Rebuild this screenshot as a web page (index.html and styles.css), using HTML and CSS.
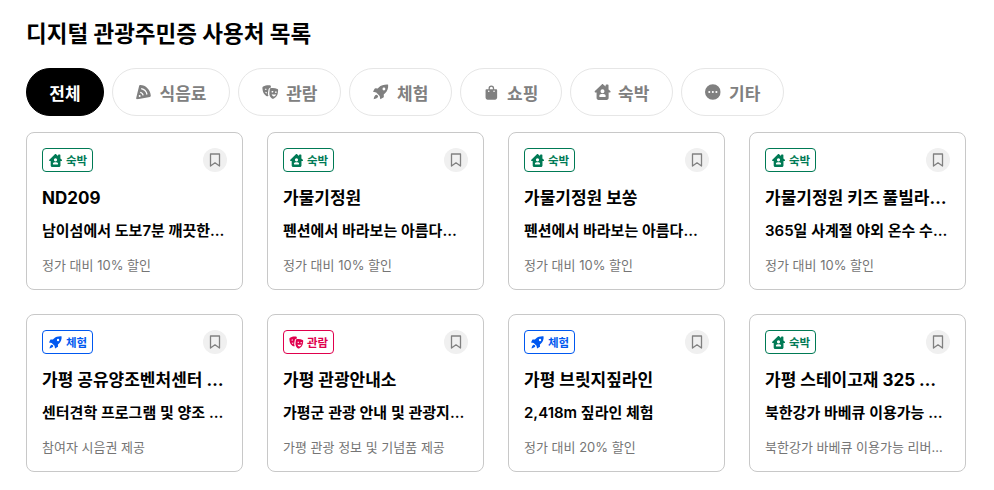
FILE: index.html
```html
<!DOCTYPE html>
<html lang="ko">
<head>
<meta charset="utf-8">
<title>디지털 관광주민증 사용처 목록</title>
<link rel="stylesheet" href="styles.css">
</head>
<body>
<svg class="defs" width="0" height="0" aria-hidden="true">
  <symbol id="i-food" viewBox="0 0 16 16"><path fill-rule="evenodd" d="M4.500 1C10 1 15 6 15.300 12c0 .6-.4 1.100-1 1.300L1.500 15.800c-.8.2-1.500-.5-1.300-1.300L3.200 2c.1-.6.7-1 1.300-1ZM5.500 4.200 5.200 5.500C8.200 6 10.200 8 10.700 11l1.300-.3C11.400 7.200 9 4.800 5.500 4.200ZM4.500 8 4.200 9.300C5.500 9.600 6.400 10.500 6.700 11.800L8 11.500C7.600 9.700 6.300 8.400 4.500 8ZM3.800 11.300a1 1 0 1 0 0 2 1 1 0 0 0 0-2Z"/></symbol>
  <symbol id="i-mask" viewBox="0 .5 18 15.500"><path d="M1.200 2.500C3.300 1.200 6 .8 8.300 1.100c.6.100 1 .5 1.100 1l.1 1.400c-1.500.3-2.500 1.200-2.700 2.600l-.5 3.100c-.2 1.200 0 2.400.6 3.400-.8.300-1.700.2-2.400-.2C2.500 11.300 1 9 .7 6.500L.4 3.900c0-.6.300-1.100.8-1.400ZM3 5.100c.5-.4 1.200-.5 1.800-.1l-.3 1.200c-.4-.3-.8-.3-1.200-.1L3 5.100Zm.2 3c.7.500 1.500.5 2.200.3-.1.800-.4 1.300-.9 1.500-.6-.3-1-1-1.300-1.800Z" fill-rule="evenodd"/><path fill-rule="evenodd" d="M8.800 4.400c2.400-.6 5.300-.3 7.600.8.500.2.800.8.700 1.300l-.4 3c-.4 2.600-2.200 4.800-4.600 5.800-.4.200-.9.200-1.300 0-2.100-1.300-3.300-3.800-3-6.300l.4-3.400c0-.6.100-1 .6-1.200Zm1.300 3.200c-.1.600.3 1 .9 1.100.5.100.9-.3 1-.8l.1-.3c-.6-.4-1.300-.4-2 0Zm3.600.5c-.1.600.3 1 .8 1.100.6.100 1-.3 1.100-.8v-.3c-.6-.4-1.300-.4-1.900 0ZM10.300 10.500c.2 1.300 1.200 2.300 2.300 2.500 1.100-.1 2.100-1 2.400-2.300-1.500.4-3.100.300-4.700-.2Z"/></symbol>
  <symbol id="i-rocket" viewBox="-.5 0 16.500 16.500"><path fill-rule="evenodd" d="M15.500.5c.3 3.500-.9 6.900-3.600 9.300l-1.100 1 .1 2.400c0 .4-.2.700-.5.900l-3.200 1.700-.7-3.400-3.600-3.600-3.400-.7 1.700-3.200c.2-.3.500-.5.900-.5l2.400.1 1-1.100C8 1.100 12 .2 15.500.5ZM11 3.600a1.500 1.500 0 1 0 0 3 1.500 1.500 0 0 0 0-3Z"/><path d="M2.800 11.100c.9-.3 2.400 1.100 2.100 2-.4 1.300-2.300 2.400-4.700 2.700.3-2.400 1.300-4.300 2.600-4.700Z"/></symbol>
  <symbol id="i-bag" viewBox="2 .8 12 15"><path fill-rule="evenodd" d="M5.200 5V4a2.800 2.800 0 0 1 5.600 0v1h2c.6 0 1 .4 1 1v7.400c0 1.200-.9 2.100-2.100 2.100H4.300c-1.200 0-2.100-.9-2.100-2.100V6c0-.6.4-1 1-1h2Zm1.300 0h3V4a1.500 1.500 0 0 0-3 0v1Zm-1.900 2a.8.800 0 1 0 1.600 0 .8.800 0 0 0-1.600 0Zm5.300 0a.8.800 0 1 0 1.600 0 .8.800 0 0 0-1.600 0Z"/></symbol>
  <symbol id="i-house" viewBox="1.400 .4 15.200 15.400"><path fill-rule="evenodd" d="M9 .5c.3 0 .5.100.7.300l2.300 2V1.600c0-.4.300-.7.700-.7h1.400c.4 0 .7.300.7.700v4l1.700 1.500c.3.300.4.700.2 1-.1.400-.5.600-.9.600h-.9v5.200c0 1-.8 1.800-1.800 1.800H5.100c-1 0-1.800-.8-1.800-1.800V8.700h-.9c-.4 0-.8-.2-.9-.6-.2-.3-.1-.7.200-1L8.300.8c.2-.2.400-.3.700-.3ZM9 5.400a1.900 1.900 0 1 0 0 3.800 1.900 1.900 0 0 0 0-3.800Zm-1 4.700c-1.200 0-2.100.9-2.100 2.100 0 .3.200.6.600.6h5c.4 0 .6-.3.600-.6 0-1.200-.9-2.100-2.100-2.100H8Z"/></symbol>
  <symbol id="i-more" viewBox=".5 .5 15 15"><path fill-rule="evenodd" d="M8 .5a7.500 7.500 0 1 1 0 15 7.500 7.500 0 0 1 0-15ZM4.600 7a1 1 0 1 0 0 2 1 1 0 0 0 0-2Zm3.400 0a1 1 0 1 0 0 2 1 1 0 0 0 0-2Zm3.400 0a1 1 0 1 0 0 2 1 1 0 0 0 0-2Z"/></symbol>
  <symbol id="i-mark" viewBox="0 0 12 14"><path d="M1.500 1h9v12L6 9.800 1.500 13V1Z" fill="none" stroke="currentColor" stroke-width="1.300" stroke-linejoin="round"/></symbol>
</svg>

<main class="page">
  <h1 class="title">디지털 관광주민증 사용처 목록</h1>

  <nav class="tabs">
    <button class="tab tab-active">전체</button>
    <button class="tab"><svg class="tab-icon"><use href="#i-food"/></svg>식음료</button>
    <button class="tab"><svg class="tab-icon tab-icon-large"><use href="#i-mask"/></svg>관람</button>
    <button class="tab"><svg class="tab-icon tab-icon-wide"><use href="#i-rocket"/></svg>체험</button>
    <button class="tab"><svg class="tab-icon tab-icon-bag"><use href="#i-bag"/></svg>쇼핑</button>
    <button class="tab"><svg class="tab-icon tab-icon-large"><use href="#i-house"/></svg>숙박</button>
    <button class="tab"><svg class="tab-icon tab-icon-wide"><use href="#i-more"/></svg>기타</button>
  </nav>

  <section class="grid">
    <article class="card">
      <div class="card-top">
        <span class="badge badge-stay"><svg class="badge-icon"><use href="#i-house"/></svg>숙박</span>
        <span class="mark"><svg class="mark-icon"><use href="#i-mark"/></svg></span>
      </div>
      <h2 class="name">ND209</h2>
      <p class="sub">남이섬에서 도보7분 깨끗한 숙소입니다</p>
      <p class="desc">정가 대비 10% 할인</p>
    </article>
    <article class="card">
      <div class="card-top">
        <span class="badge badge-stay"><svg class="badge-icon"><use href="#i-house"/></svg>숙박</span>
        <span class="mark"><svg class="mark-icon"><use href="#i-mark"/></svg></span>
      </div>
      <h2 class="name">가물기정원</h2>
      <p class="sub">펜션에서 바라보는 아름다운 풍경</p>
      <p class="desc">정가 대비 10% 할인</p>
    </article>
    <article class="card">
      <div class="card-top">
        <span class="badge badge-stay"><svg class="badge-icon"><use href="#i-house"/></svg>숙박</span>
        <span class="mark"><svg class="mark-icon"><use href="#i-mark"/></svg></span>
      </div>
      <h2 class="name">가물기정원 보쏭</h2>
      <p class="sub">펜션에서 바라보는 아름다운 풍경</p>
      <p class="desc">정가 대비 10% 할인</p>
    </article>
    <article class="card">
      <div class="card-top">
        <span class="badge badge-stay"><svg class="badge-icon"><use href="#i-house"/></svg>숙박</span>
        <span class="mark"><svg class="mark-icon"><use href="#i-mark"/></svg></span>
      </div>
      <h2 class="name">가물기정원 키즈 풀빌라 펜션</h2>
      <p class="sub">365일 사계절 야외 온수 수영장</p>
      <p class="desc">정가 대비 10% 할인</p>
    </article>
    <article class="card">
      <div class="card-top">
        <span class="badge badge-play"><svg class="badge-icon"><use href="#i-rocket"/></svg>체험</span>
        <span class="mark"><svg class="mark-icon"><use href="#i-mark"/></svg></span>
      </div>
      <h2 class="name">가평 공유양조벤처센터 술도가</h2>
      <p class="sub">센터견학 프로그램 및 양조 체험</p>
      <p class="desc">참여자 시음권 제공</p>
    </article>
    <article class="card">
      <div class="card-top">
        <span class="badge badge-view"><svg class="badge-icon badge-icon-mask"><use href="#i-mask"/></svg>관람</span>
        <span class="mark"><svg class="mark-icon"><use href="#i-mark"/></svg></span>
      </div>
      <h2 class="name">가평 관광안내소</h2>
      <p class="sub">가평군 관광 안내 및 관광지 소개</p>
      <p class="desc">가평 관광 정보 및 기념품 제공</p>
    </article>
    <article class="card">
      <div class="card-top">
        <span class="badge badge-play"><svg class="badge-icon"><use href="#i-rocket"/></svg>체험</span>
        <span class="mark"><svg class="mark-icon"><use href="#i-mark"/></svg></span>
      </div>
      <h2 class="name">가평 브릿지짚라인</h2>
      <p class="sub">2,418m 짚라인 체험</p>
      <p class="desc">정가 대비 20% 할인</p>
    </article>
    <article class="card">
      <div class="card-top">
        <span class="badge badge-stay"><svg class="badge-icon"><use href="#i-house"/></svg>숙박</span>
        <span class="mark"><svg class="mark-icon"><use href="#i-mark"/></svg></span>
      </div>
      <h2 class="name">가평 스테이고재 325 펜션</h2>
      <p class="sub">북한강가 바베큐 이용가능 리버뷰</p>
      <p class="desc">북한강가 바베큐 이용가능 리버뷰 숙소</p>
    </article>
  </section>
</main>
</body>
</html>
```

FILE: styles.css
```css
* { box-sizing: border-box; }

html, body {
  margin: 0;
  padding: 0;
  background: #fff;
  overflow: hidden;
}

body {
  font-family: Inter, "Noto Sans CJK KR", "Noto Sans", sans-serif;
  color: #000;
}

.defs { position: absolute; }

.page {
  width: 994px;
  height: 490px;
  padding: 18px 28px 0 26px;
}

.title {
  margin: 0;
  height: 32px;
  font-size: 22.500px;
  line-height: 32px;
  font-weight: 700;
}

.tabs {
  display: flex;
  gap: 8px;
  margin-top: 18px;
}

.tab {
  display: flex;
  align-items: center;
  justify-content: center;
  gap: 8px;
  height: 48px;
  padding: 0 23px;
  border: 1px solid #e6e6e6;
  border-radius: 24px;
  background: #fff;
  color: #808080;
  font-family: inherit;
  font-size: 17px;
  font-weight: 700;
  white-space: nowrap;
}

.tab-active {
  width: 78px;
  padding: 0;
  border-color: #000;
  background: #000;
  color: #fff;
}

.tab-icon {
  width: 15.500px;
  height: 15.500px;
  fill: #808080;
}

.tab-icon-wide { width: 15.700px; height: 16px; }
.tab-icon-large { width: 17px; height: 16px; margin-right: -1.300px; }
.tab-icon-bag { width: 14.700px; height: 15px; }

.grid {
  display: grid;
  grid-template-columns: repeat(4, 217px);
  grid-template-rows: repeat(2, 158px);
  gap: 24px;
  margin-top: 16px;
}

.card {
  min-width: 0;
  padding: 15px;
  border: 1px solid #c8c8c8;
  border-radius: 8px;
  background: #fff;
}

.card-top {
  display: flex;
  align-items: center;
  justify-content: space-between;
  height: 24px;
}

.badge {
  display: flex;
  align-items: center;
  gap: 4px;
  width: 51px;
  height: 24px;
  padding-left: 6px;
  border: 1px solid currentColor;
  border-radius: 4px;
  font-size: 11.500px;
  font-weight: 700;
  white-space: nowrap;
}

.badge-stay { color: #007a55; }
.badge-play { color: #0058f0; }
.badge-view { color: #e0004d; }

.badge-icon {
  width: 13px;
  height: 13px;
  fill: currentColor;
}

.badge-icon-mask {
  width: 15px;
  margin-left: -1px;
  margin-right: -1px;
}

.mark {
  display: flex;
  align-items: center;
  justify-content: center;
  width: 24px;
  height: 24px;
  border-radius: 50%;
  background: #f0f0f0;
  color: #808080;
}

.mark-icon {
  width: 12px;
  height: 14px;
}

.name {
  margin: 13px 0 0;
  height: 26px;
  font-size: 17px;
  line-height: 26px;
  font-weight: 700;
  overflow: hidden;
  white-space: nowrap;
  text-overflow: ellipsis;
}

.sub {
  margin: 9px 0 0;
  height: 22px;
  font-size: 15px;
  line-height: 22px;
  font-weight: 600;
  overflow: hidden;
  white-space: nowrap;
  text-overflow: ellipsis;
}

.desc {
  margin: 13px 0 0;
  height: 20px;
  font-size: 13px;
  line-height: 20px;
  font-weight: 400;
  color: #757575;
  overflow: hidden;
  white-space: nowrap;
  text-overflow: ellipsis;
}
```
